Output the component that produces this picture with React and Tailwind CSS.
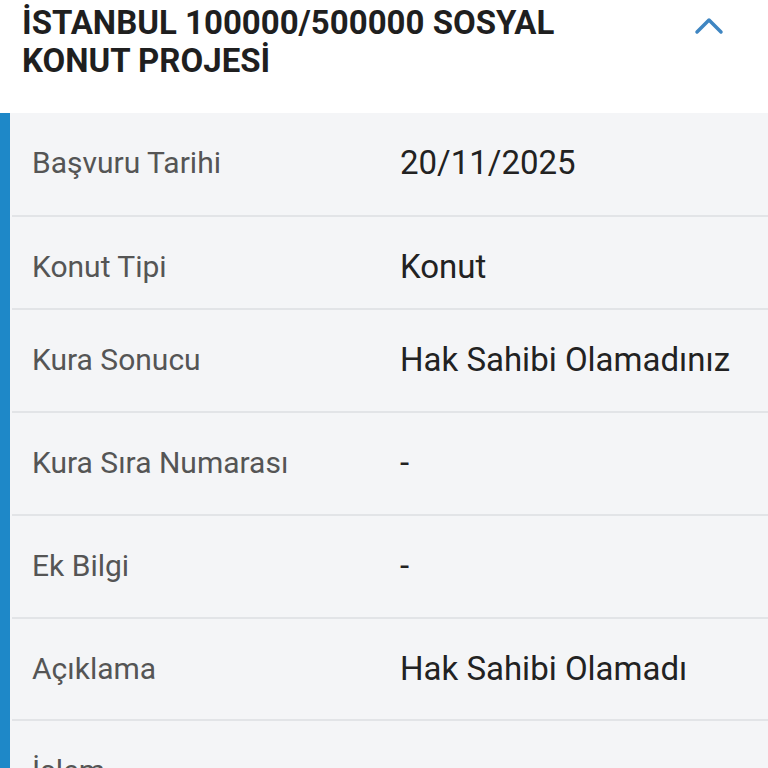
export default function App() {
  const rows = [
    { label: "Başvuru Tarihi", value: "20/11/2025", h: "h-[104px]" },
    { label: "Konut Tipi", value: "Konut", h: "h-[93px]" },
    { label: "Kura Sonucu", value: "Hak Sahibi Olamadınız", h: "h-[103px]" },
    { label: "Kura Sıra Numarası", value: "-", h: "h-[103px]" },
    { label: "Ek Bilgi", value: "-", h: "h-[103px]" },
    { label: "Açıklama", value: "Hak Sahibi Olamadı", h: "h-[102px]" },
  ];
  return (
    <div className="w-[768px] h-[768px] overflow-hidden bg-white" style={{ fontFamily: "Roboto, 'Noto Sans', sans-serif" }}>
      <div className="h-[113px] bg-white flex items-start pl-[22px] pr-[44px] pt-[4px]">
        <div className="flex-1 text-[33px] leading-[38px] font-bold text-[#1f1f1f]">
          İSTANBUL 100000/500000 SOSYAL
          <br />
          KONUT PROJESİ
        </div>
        <svg className="mt-[12px]" width="30" height="20" viewBox="0 0 30 20" fill="none">
          <polyline points="3,16 15,4 27,16" stroke="#3f86c2" strokeWidth="3.5" strokeLinecap="round" strokeLinejoin="round" />
        </svg>
      </div>
      <div className="flex border-l-[10px] border-[#1e88c8] bg-[#f4f5f7] h-[655px]">
        <div className="flex-1 flex flex-col pl-[2px]">
          {rows.map((r) => (
            <div key={r.label} className={`${r.h} shrink-0 flex items-start pt-[30px] border-b-2 border-[#e2e4e7]`}>
              <div className="w-[388px] shrink-0 pl-[20px] text-[30px] leading-[40px] text-[#555555]">{r.label}</div>
              <div className="flex-1 text-[33px] leading-[40px] text-[#222222]">{r.value}</div>
            </div>
          ))}
          <div className="shrink-0 flex items-start pt-[30px]">
            <div className="w-[388px] pl-[20px] text-[30px] leading-[40px] text-[#555555]">İşlem</div>
          </div>
        </div>
      </div>
    </div>
  );
}
